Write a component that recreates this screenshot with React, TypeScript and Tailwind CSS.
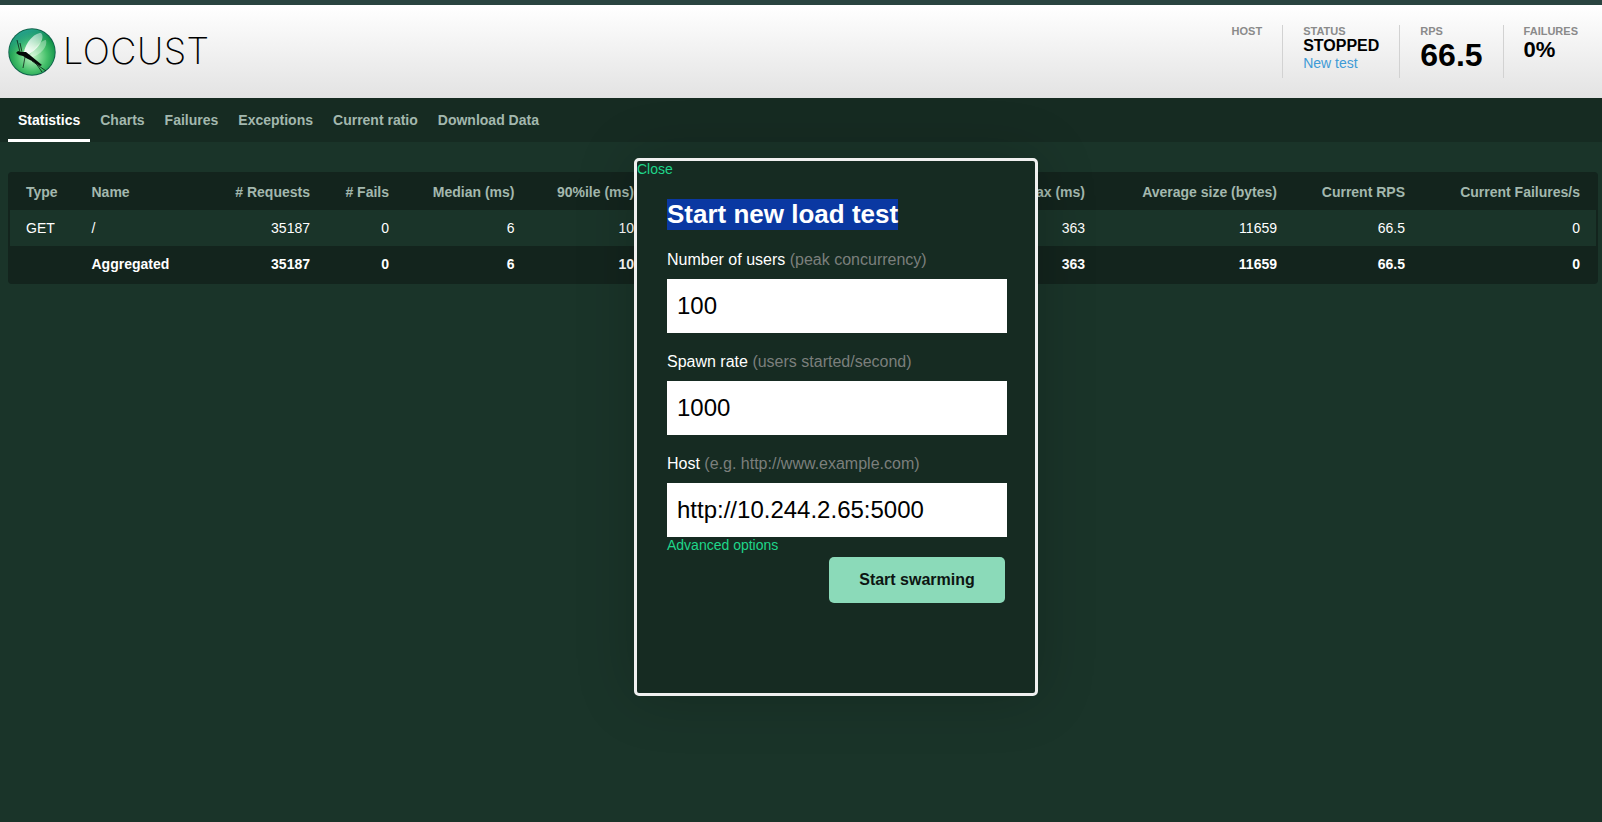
const FONT = 'font-["Liberation_Sans",Arial,sans-serif]';

const columns = [
  { label: 'Type', width: 'w-[65.5px]', left: true },
  { label: 'Name', width: 'w-[130px]', left: true },
  { label: '# Requests', width: 'w-[120.5px]' },
  { label: '# Fails', width: 'w-[79px]' },
  { label: 'Median (ms)', width: 'w-[125.5px]' },
  { label: '90%ile (ms)', width: 'w-[119.5px]' },
  { label: '99%ile (ms)', width: 'w-[120px]' },
  { label: 'Average (ms)', width: 'w-[120px]' },
  { label: 'Min (ms)', width: 'w-[100px]' },
  { label: 'Max (ms)', width: 'w-[111px]' },
  { label: 'Average size (bytes)', width: 'w-[192px]' },
  { label: 'Current RPS', width: 'w-[128px]' },
  { label: 'Current Failures/s', width: 'w-[175px]' },
];

const rows = [
  { cells: ['GET', '/', '35187', '0', '6', '10', '39', '8', '2', '363', '11659', '66.5', '0'], bold: false },
  { cells: ['', 'Aggregated', '35187', '0', '6', '10', '39', '8', '2', '363', '11659', '66.5', '0'], bold: true },
];

const tabs = ['Statistics', 'Charts', 'Failures', 'Exceptions', 'Current ratio', 'Download Data'];

function LocustMark() {
  return (
    <svg width="48" height="48" viewBox="0 0 48 48" className="shrink-0">
      <defs>
        <radialGradient id="ball" cx="0.5" cy="0.6" r="0.55">
          <stop offset="0" stopColor="#c2f5c6" />
          <stop offset="0.6" stopColor="#45c06a" />
          <stop offset="1" stopColor="#109048" />
        </radialGradient>
        <linearGradient id="rim" x1="0" y1="0" x2="0.4" y2="1">
          <stop offset="0" stopColor="#2fa8a8" />
          <stop offset="0.5" stopColor="#2fa8a8" stopOpacity="0" />
        </linearGradient>
        <linearGradient id="wing" x1="1" y1="0" x2="0" y2="1">
          <stop offset="0" stopColor="#ffffff" stopOpacity="0.4" />
          <stop offset="1" stopColor="#ffffff" stopOpacity="1" />
        </linearGradient>
      </defs>
      <circle cx="24" cy="24" r="23.7" fill="#0d5f4a" />
      <circle cx="24" cy="24" r="22.8" fill="url(#ball)" />
      <circle cx="24" cy="24" r="22.8" fill="url(#rim)" />
      <path d="M16 25C17 15 26 5 33 5C37 8 33 20 19 27Z" fill="url(#wing)" />
      <path d="M22 27C27 19 34 12 38 12C40 18 33 27 24 29Z" fill="#fff" opacity="0.35" />
      <path d="M8 25L10 23L13 24L18 24L23 28L34 37L32 38L24 33L18 30L15 28L11 27Z" fill="#050a08" />
      <path d="M12 24L9 12M14 24L12 15M17 29L15 40M24 33L38 43M27 34L34 44" stroke="#050a08" strokeWidth="0.7" fill="none" />
    </svg>
  );
}

function Stat({ label, children }: { label: string; children?: React.ReactNode }) {
  return (
    <div className="h-[53px] border-r border-[#d2d2d2] last:border-r-0 pl-5 pr-5 last:pr-6 first:pl-0">
      <div className="text-[11px] leading-3 font-bold uppercase text-[#8a8a8a]">{label}</div>
      {children}
    </div>
  );
}

function Field({ label, hint, value }: { label: string; hint: string; value: string }) {
  return (
    <div className="flex flex-col">
      <label className="text-base leading-[18px] mb-[10px] text-white">
        {label} <span className="text-[#7b7f7c]">{hint}</span>
      </label>
      <input
        readOnly
        value={value}
        className="w-[340px] h-[54px] bg-white text-black text-2xl px-[10px] outline-none"
      />
    </div>
  );
}

export default function App() {
  return (
    <div className={`relative h-[822px] overflow-hidden bg-[#1a3429] ${FONT}`}>
      <div className="h-[5px] bg-[#2a4440]" />
      <header className="h-[93px] flex justify-between bg-gradient-to-b from-white to-[#e3e3e3]">
        <div className="flex items-center pl-2">
          <LocustMark />
          <span className='ml-[7px] mb-[2px] text-[36px] leading-none font-extralight text-black tracking-[0.5px] font-["Inter",sans-serif]'>
            LOCUST
          </span>
        </div>
        <div className="flex pt-[20px] text-black">
          <Stat label="Host" />
          <Stat label="Status">
            <div className="text-base leading-[17px] font-bold">STOPPED</div>
            <a className="block text-sm leading-[19px] text-[#3f9bd6]">New test</a>
          </Stat>
          <Stat label="RPS">
            <div className="text-[32px] leading-[34px] mt-[1px] font-bold">66.5</div>
          </Stat>
          <Stat label="Failures">
            <div className="text-[22px] leading-[24px] mt-[1px] font-bold">0%</div>
          </Stat>
        </div>
      </header>

      <nav className="h-[44px] bg-[#162b22] flex pl-2">
        {tabs.map((tab, i) => (
          <a
            key={tab}
            className={`h-full px-[10px] text-sm font-bold leading-[44px] border-b-[3px] ${
              i === 0 ? 'text-white border-white' : 'text-[#a3b8ae] border-transparent'
            }`}
          >
            {tab}
          </a>
        ))}
      </nav>

      <main className="pl-2 pt-[30px]">
        <div className="w-[1590px] border-2 border-[#13241d] rounded">
          <table className="w-full table-fixed border-collapse text-sm text-white">
            <colgroup>
              {columns.map((c) => (
                <col key={c.label} className={c.width} />
              ))}
            </colgroup>
            <thead>
              <tr className="h-[36px] bg-[#13241d]">
                {columns.map((c) => (
                  <th
                    key={c.label}
                    className={`font-bold text-[#a3b8ae] whitespace-nowrap px-4 ${c.left ? 'text-left' : 'text-right'}`}
                  >
                    {c.label}
                  </th>
                ))}
              </tr>
            </thead>
            <tbody>
              {rows.map((row) => (
                <tr key={row.cells[1]} className={row.bold ? 'h-[36px] bg-[#13241d] font-bold' : 'h-[36px]'}>
                  {row.cells.map((cell, i) => (
                    <td key={columns[i].label} className={`px-4 ${columns[i].left ? 'text-left' : 'text-right'}`}>
                      {cell}
                    </td>
                  ))}
                </tr>
              ))}
            </tbody>
          </table>
        </div>
      </main>

      <div className="absolute left-[634px] top-[158px] w-[404px] h-[538px] bg-[#162b22] border-[3px] border-[#f0f0f0] rounded-[5px] shadow-[0_0_60px_rgba(0,0,0,0.2)]">
        <a className="block text-sm leading-4 text-[#1fd68a]">Close</a>
        <div className="pl-[30px] pt-[22px]">
          <h2 className="text-[26px] leading-[31px] font-bold text-white mb-[21px]">
            <span className="inline-block bg-[#0a38a2]">Start new load test</span>
          </h2>
          <div className="flex flex-col gap-[20px]">
            <Field label="Number of users" hint="(peak concurrency)" value="100" />
            <Field label="Spawn rate" hint="(users started/second)" value="1000" />
            <Field label="Host" hint="(e.g. http://www.example.com)" value="http://10.244.2.65:5000" />
          </div>
          <a className="block text-sm leading-4 text-[#1fd68a]">Advanced options</a>
          <div className="flex justify-end w-[338px] mt-[4px]">
            <button
              type="button"
              className="w-[176px] h-[46px] rounded-[5px] bg-[#8bdab9] text-base font-bold text-[#0d1512]"
            >
              Start swarming
            </button>
          </div>
        </div>
      </div>
    </div>
  );
}
